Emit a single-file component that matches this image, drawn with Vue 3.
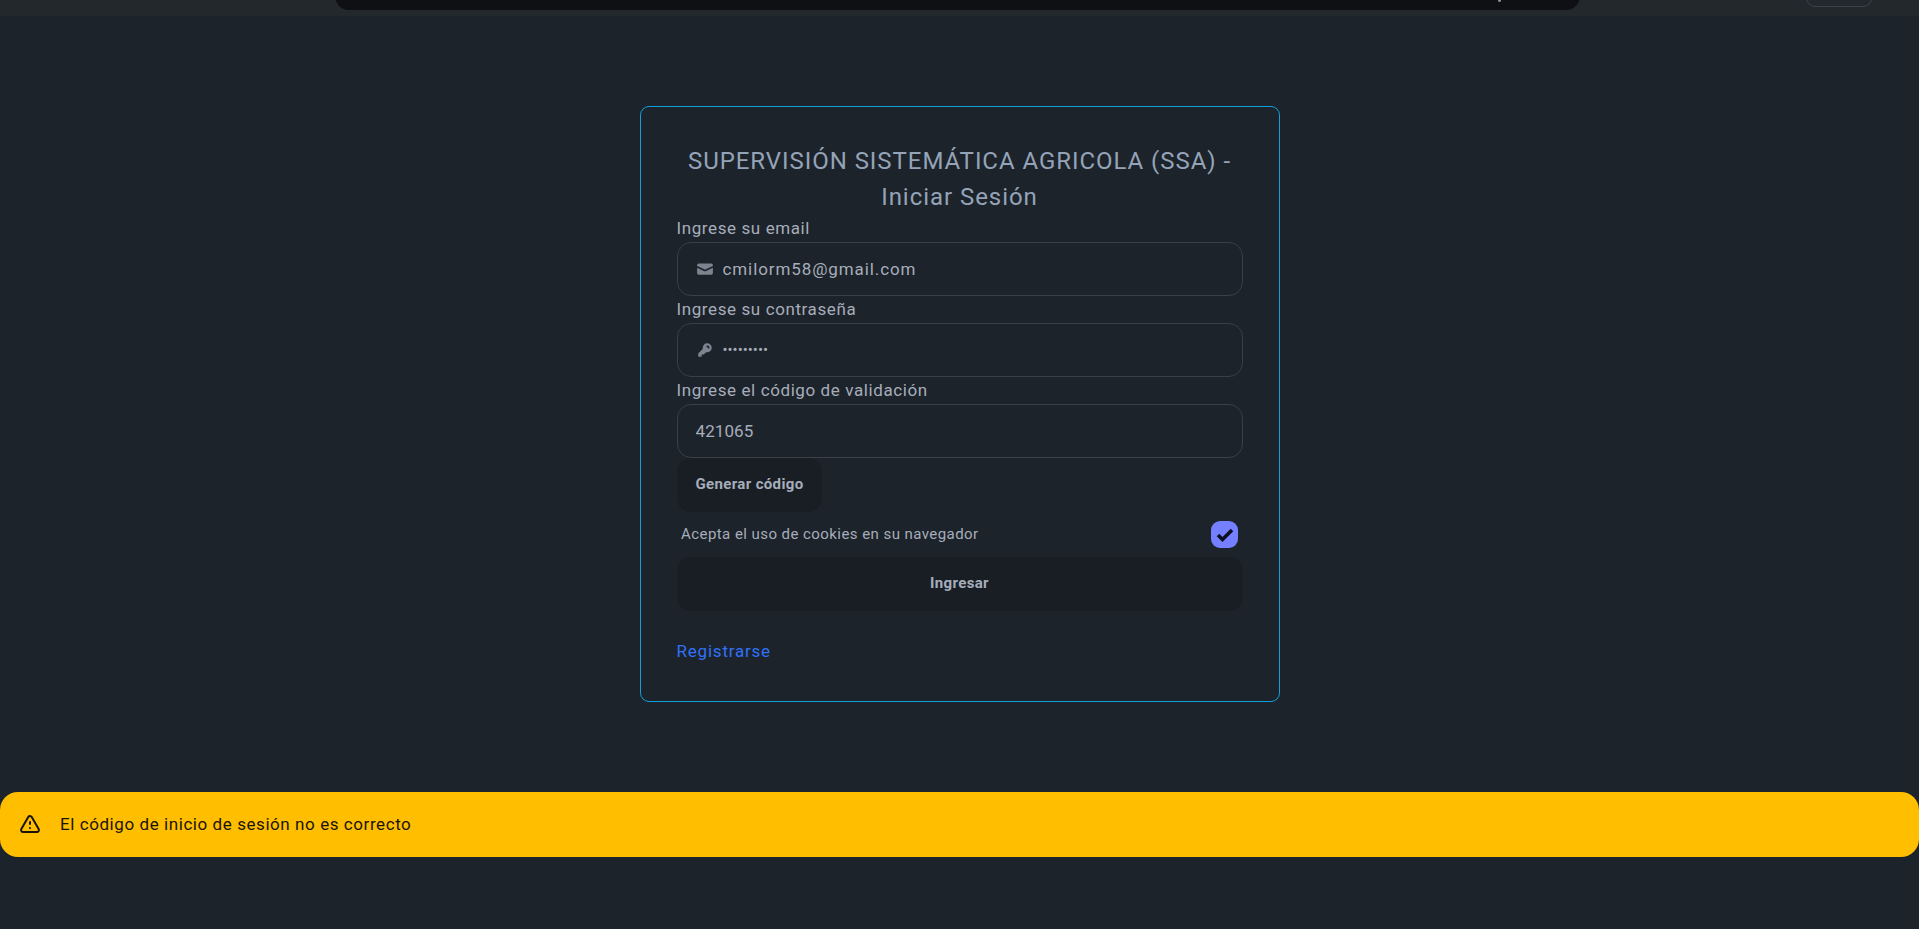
<script setup>
import { ref } from 'vue'

const email = ref('cmilorm58@gmail.com')
const password = ref('123456789')
const code = ref('421065')
</script>

<template>
  <div class="page">
    <header class="topbar">
      <div class="searchbar"><span class="dot"></span></div>
      <div class="topbtn"></div>
    </header>

    <main class="content">
      <form class="card" @submit.prevent>
        <h2 class="title">SUPERVISIÓN SISTEMÁTICA AGRICOLA (SSA) - Iniciar Sesión</h2>

        <label class="field-label">Ingrese su email</label>
        <div class="input">
          <svg class="icon" viewBox="0 0 16 16" fill="currentColor">
            <path d="M2.5 3A1.5 1.5 0 0 0 1 4.5v.793c.026.009.051.02.076.032L7.674 8.51c.206.1.446.1.652 0l6.598-3.185A.755.755 0 0 1 15 5.293V4.5A1.5 1.5 0 0 0 13.5 3h-11Z" />
            <path d="M15 6.954 8.978 9.86a2.25 2.25 0 0 1-1.956 0L1 6.954V11.5A1.5 1.5 0 0 0 2.5 13h11a1.5 1.5 0 0 0 1.5-1.5V6.954Z" />
          </svg>
          <input v-model="email" class="email" type="text" />
        </div>

        <label class="field-label">Ingrese su contraseña</label>
        <div class="input">
          <svg class="icon" viewBox="0 0 16 16" fill="currentColor">
            <path fill-rule="evenodd" clip-rule="evenodd" d="M14 6a4 4 0 0 1-4.899 3.899l-1.955 1.955a.5.5 0 0 1-.353.146H5v1.5a.5.5 0 0 1-.5.5h-2a.5.5 0 0 1-.5-.5v-2.293a.5.5 0 0 1 .146-.353l3.955-3.955A4 4 0 1 1 14 6Zm-4-2a.75.75 0 0 0 0 1.5.5.5 0 0 1 .5.5.75.75 0 0 0 1.5 0 2 2 0 0 0-2-2Z" />
          </svg>
          <input v-model="password" class="password" type="password" />
        </div>

        <label class="field-label">Ingrese el código de validación</label>
        <div class="input">
          <input v-model="code" class="code" type="text" />
        </div>

        <button class="btn btn-code" type="button">Generar código</button>

        <div class="cookies">
          <span>Acepta el uso de cookies en su navegador</span>
          <span class="checkbox">
            <svg viewBox="0 0 27 27" fill="none">
              <path d="M7 14l4.5 4.5L21 9" stroke="#0e0f20" stroke-width="3.6" />
            </svg>
          </span>
        </div>

        <button class="btn btn-login" type="submit">Ingresar</button>

        <a class="register" href="#">Registrarse</a>
      </form>

      <div class="alert" role="alert">
        <svg class="alert-icon" viewBox="0 0 24 24" fill="none" stroke="currentColor" stroke-width="2" stroke-linecap="round" stroke-linejoin="round">
          <path d="M12 9v2m0 4h.01m-6.938 4h13.856c1.54 0 2.502-1.667 1.732-3L13.732 4c-.77-1.333-2.694-1.333-3.464 0L3.34 16c-.77 1.333.192 3 1.732 3z" />
        </svg>
        <span>El código de inicio de sesión no es correcto</span>
      </div>
    </main>
  </div>
</template>

<style>
html, body {
  margin: 0;
  background: #1d232a;
}
</style>

<style scoped>
.page {
  min-height: 929px;
  background: #1d232a;
  font-family: Roboto, "Liberation Sans", sans-serif;
  font-size: 17px;
  line-height: 27px;
  color: #a6adbb;
}

.topbar {
  height: 16px;
  background: #22282c;
  overflow: hidden;
  display: flex;
  align-items: flex-end;
  padding-left: 335px;
  box-sizing: border-box;
}

.searchbar {
  width: 1245px;
  height: 40px;
  margin-bottom: 6px;
  background: #0e1014;
  border-radius: 14px;
  position: relative;
}

.dot {
  position: absolute;
  left: 1163px;
  bottom: 8px;
  width: 3px;
  height: 3px;
  border-radius: 50%;
  background: #8a8d92;
}

.topbtn {
  width: 66px;
  height: 36px;
  margin-left: 226px;
  margin-bottom: 9px;
  border: 1px solid #3d434b;
  border-radius: 9px;
  box-sizing: border-box;
}

.content {
  display: flex;
  flex-direction: column;
  align-items: center;
  padding-top: 90px;
}

.card {
  width: 640px;
  box-sizing: border-box;
  padding: 36px;
  border: 1px solid #119fdc;
  border-radius: 9px;
  display: flex;
  flex-direction: column;
}

.title {
  margin: 0;
  font-size: 24px;
  line-height: 36px;
  font-weight: 400;
  letter-spacing: 0.95px;
  text-align: center;
  color: #94a3b8;
}

.field-label {
  height: 27px;
  letter-spacing: 0.6px;
}

.input {
  height: 54px;
  box-sizing: border-box;
  padding: 0 18px;
  border: 1px solid #383f47;
  border-radius: 14px;
  display: flex;
  align-items: center;
  gap: 9px;
}

.input input {
  flex: 1;
  min-width: 0;
  border: 0;
  outline: 0;
  padding: 0;
  background: transparent;
  color: #a6adbb;
  font: inherit;
}

.input .email {
  letter-spacing: 0.9px;
}

.input .password {
  font-size: 15px;
}

.input .code {
  letter-spacing: 0.1px;
}

.icon {
  width: 18px;
  height: 18px;
  opacity: 0.7;
  flex: none;
}

.btn {
  height: 54px;
  border: 0;
  border-radius: 14px;
  background: #191e24;
  color: #a6adbb;
  font-family: inherit;
  font-size: 15px;
  font-weight: 700;
  letter-spacing: 0.35px;
  padding: 0 19px 2px;
}

.btn-code {
  align-self: flex-start;
}

.cookies {
  display: flex;
  align-items: center;
  justify-content: space-between;
  padding: 9px 4.5px;
  font-size: 15px;
  letter-spacing: 0.44px;
}

.checkbox {
  width: 27px;
  height: 27px;
  border-radius: 9px;
  background: #7480ff;
}

.checkbox svg {
  display: block;
  width: 27px;
  height: 27px;
}

.register {
  margin-top: 27px;
  color: #3072f7;
  letter-spacing: 0.79px;
  text-decoration: none;
  align-self: flex-start;
}

.alert {
  align-self: stretch;
  margin-top: 90px;
  box-sizing: border-box;
  height: 65px;
  padding: 0 18px;
  border-radius: 18px;
  background: #ffbe00;
  color: #1a1405;
  letter-spacing: 0.57px;
  display: flex;
  align-items: center;
  gap: 18px;
}

.alert-icon {
  width: 24px;
  height: 24px;
  flex: none;
}
</style>
